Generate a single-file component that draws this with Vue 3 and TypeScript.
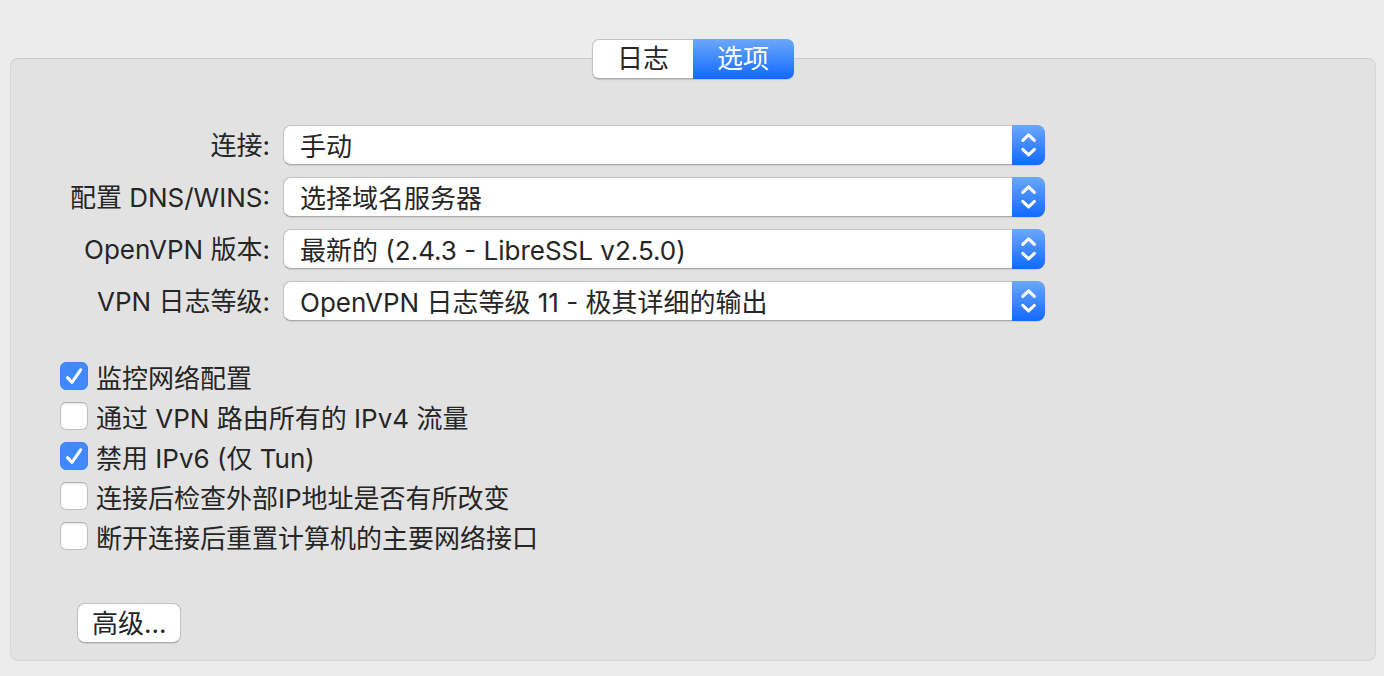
<script setup lang="ts">
import { ref } from 'vue'

interface SelectField {
  id: string
  label: string
  value: string
  options: string[]
}

interface CheckField {
  id: string
  label: string
  checked: boolean
}

const tabs = ['日志', '选项']
const activeTab = ref('选项')

const selects = ref<SelectField[]>([
  { id: 'connect', label: '连接:', value: '手动', options: ['手动'] },
  { id: 'dns', label: '配置 DNS/WINS:', value: '选择域名服务器', options: ['选择域名服务器'] },
  {
    id: 'version',
    label: 'OpenVPN 版本:',
    value: '最新的 (2.4.3 - LibreSSL v2.5.0)',
    options: ['最新的 (2.4.3 - LibreSSL v2.5.0)'],
  },
  {
    id: 'log-level',
    label: 'VPN 日志等级:',
    value: 'OpenVPN 日志等级 11 - 极其详细的输出',
    options: ['OpenVPN 日志等级 11 - 极其详细的输出'],
  },
])

const checks = ref<CheckField[]>([
  { id: 'monitor', label: '监控网络配置', checked: true },
  { id: 'route', label: '通过 VPN 路由所有的 IPv4 流量', checked: false },
  { id: 'ipv6', label: '禁用 IPv6 (仅 Tun)', checked: true },
  { id: 'check-ip', label: '连接后检查外部IP地址是否有所改变', checked: false },
  { id: 'reset', label: '断开连接后重置计算机的主要网络接口', checked: false },
])
</script>

<template>
  <main class="window">
    <div class="tabs" role="tablist">
      <button
        v-for="tab in tabs"
        :key="tab"
        type="button"
        role="tab"
        class="tab"
        :class="{ active: tab === activeTab }"
        :aria-selected="tab === activeTab"
        @click="activeTab = tab"
      >{{ tab }}</button>
    </div>

    <section class="panel">
      <div class="fields">
        <template v-for="field in selects" :key="field.id">
          <label class="field-label" :for="field.id">{{ field.label }}</label>
          <div class="popup">
            <select :id="field.id" v-model="field.value">
              <option v-for="option in field.options" :key="option" :value="option">{{ option }}</option>
            </select>
            <span class="stepper" aria-hidden="true">
              <svg viewBox="0 0 33 40" width="33" height="40">
                <path d="M10.8 15.4 L16.6 9.8 L22.4 15.4 M10.8 24.3 L16.6 29.9 L22.4 24.3" />
              </svg>
            </span>
          </div>
        </template>
      </div>

      <div class="checks">
        <div v-for="item in checks" :key="item.id" class="check">
          <span class="box">
            <input :id="item.id" v-model="item.checked" type="checkbox" />
            <svg v-if="item.checked" viewBox="0 0 28 28" width="28" height="28" aria-hidden="true">
              <path d="M7.5 15.6 L12 20.4 L20.7 7.8" />
            </svg>
          </span>
          <label :for="item.id">{{ item.label }}</label>
        </div>
      </div>

      <button type="button" class="advanced">高级...</button>
    </section>
  </main>
</template>

<style>
html,
body {
  background: #ececec;
}
</style>

<style scoped>
.window {
  padding: 39px 8px 15px 10px;
  font-family: Inter, 'Noto Sans CJK SC', sans-serif;
  font-size: 26px;
  line-height: 40px;
  color: #262626;
}

button,
select {
  font: inherit;
  color: inherit;
  margin: 0;
  border: 0;
}

.tabs {
  position: relative;
  display: flex;
  width: max-content;
  margin: 0 auto -21px;
  border-radius: 7px;
  box-shadow: 0 1px 1px #c4c4c4;
}

.tab {
  box-sizing: border-box;
  width: 101px;
  height: 40px;
  padding: 0;
  line-height: 38px;
  border: 1px solid #c2c2c2;
  border-bottom-color: #a8a8a8;
  background: #fff;
}

.tab:first-child {
  border-right: 0;
  border-radius: 7px 0 0 7px;
}

.tab:last-child {
  border-left: 0;
  border-radius: 0 7px 7px 0;
}

.tab.active {
  color: #fff;
  border-color: transparent;
  background: linear-gradient(#6ba8fa, #1169ff) border-box;
}

.panel {
  box-sizing: border-box;
  padding: 66px 49px 17px;
  border: 1px solid #d8d8d8;
  border-top-color: #cdcdcd;
  border-radius: 8px;
  background: #e2e2e2;
}

.fields {
  display: grid;
  grid-template-columns: 210px minmax(0, 762px);
  gap: 12px 13px;
}

.field-label {
  line-height: 42px;
  height: 40px;
  text-align: right;
  white-space: nowrap;
}

.popup {
  display: grid;
  height: 40px;
}

.popup > * {
  grid-area: 1 / 1;
}

.popup select {
  appearance: none;
  width: 100%;
  height: 40px;
  padding: 3px 45px 0 16px;
  line-height: 36px;
  border: 1px solid #c2c2c2;
  border-bottom-color: #a8a8a8;
  border-radius: 8px;
  background: #fff;
  box-shadow: 0 1px 1px #cfcfcf;
}

.stepper {
  justify-self: end;
  width: 33px;
  height: 40px;
  border-radius: 0 8px 8px 0;
  background: linear-gradient(#6ba8fa, #1169ff);
  pointer-events: none;
}

svg {
  display: block;
  fill: none;
  stroke: #fff;
  stroke-linecap: round;
  stroke-linejoin: round;
}

.stepper svg {
  stroke-width: 3;
}

.checks {
  margin-top: 35px;
}

.check {
  display: flex;
  align-items: center;
  gap: 8px;
  height: 40px;
}

.check label {
  padding-top: 5px;
  line-height: 36px;
}

.box {
  display: grid;
  width: 28px;
  height: 28px;
}

.box > * {
  grid-area: 1 / 1;
}

.box input {
  appearance: none;
  box-sizing: border-box;
  width: 28px;
  height: 28px;
  margin: 0;
  border: 1px solid #c1c1c1;
  border-top-color: #b0b0b0;
  border-radius: 6px;
  background: #fff;
  box-shadow: inset 0 1px 2px #e4e4e4;
}

.box input:checked {
  border-color: #3984f7;
  background: #4089fa;
  box-shadow: none;
}

.box svg {
  stroke-width: 3;
  pointer-events: none;
}

.advanced {
  display: block;
  height: 40px;
  margin: 47px 0 0 17px;
  padding: 2px 14px 0;
  line-height: 36px;
  border: 1px solid #c2c2c2;
  border-bottom-color: #a8a8a8;
  border-radius: 8px;
  background: #fff;
  box-shadow: 0 1px 1px #cfcfcf;
}
</style>
